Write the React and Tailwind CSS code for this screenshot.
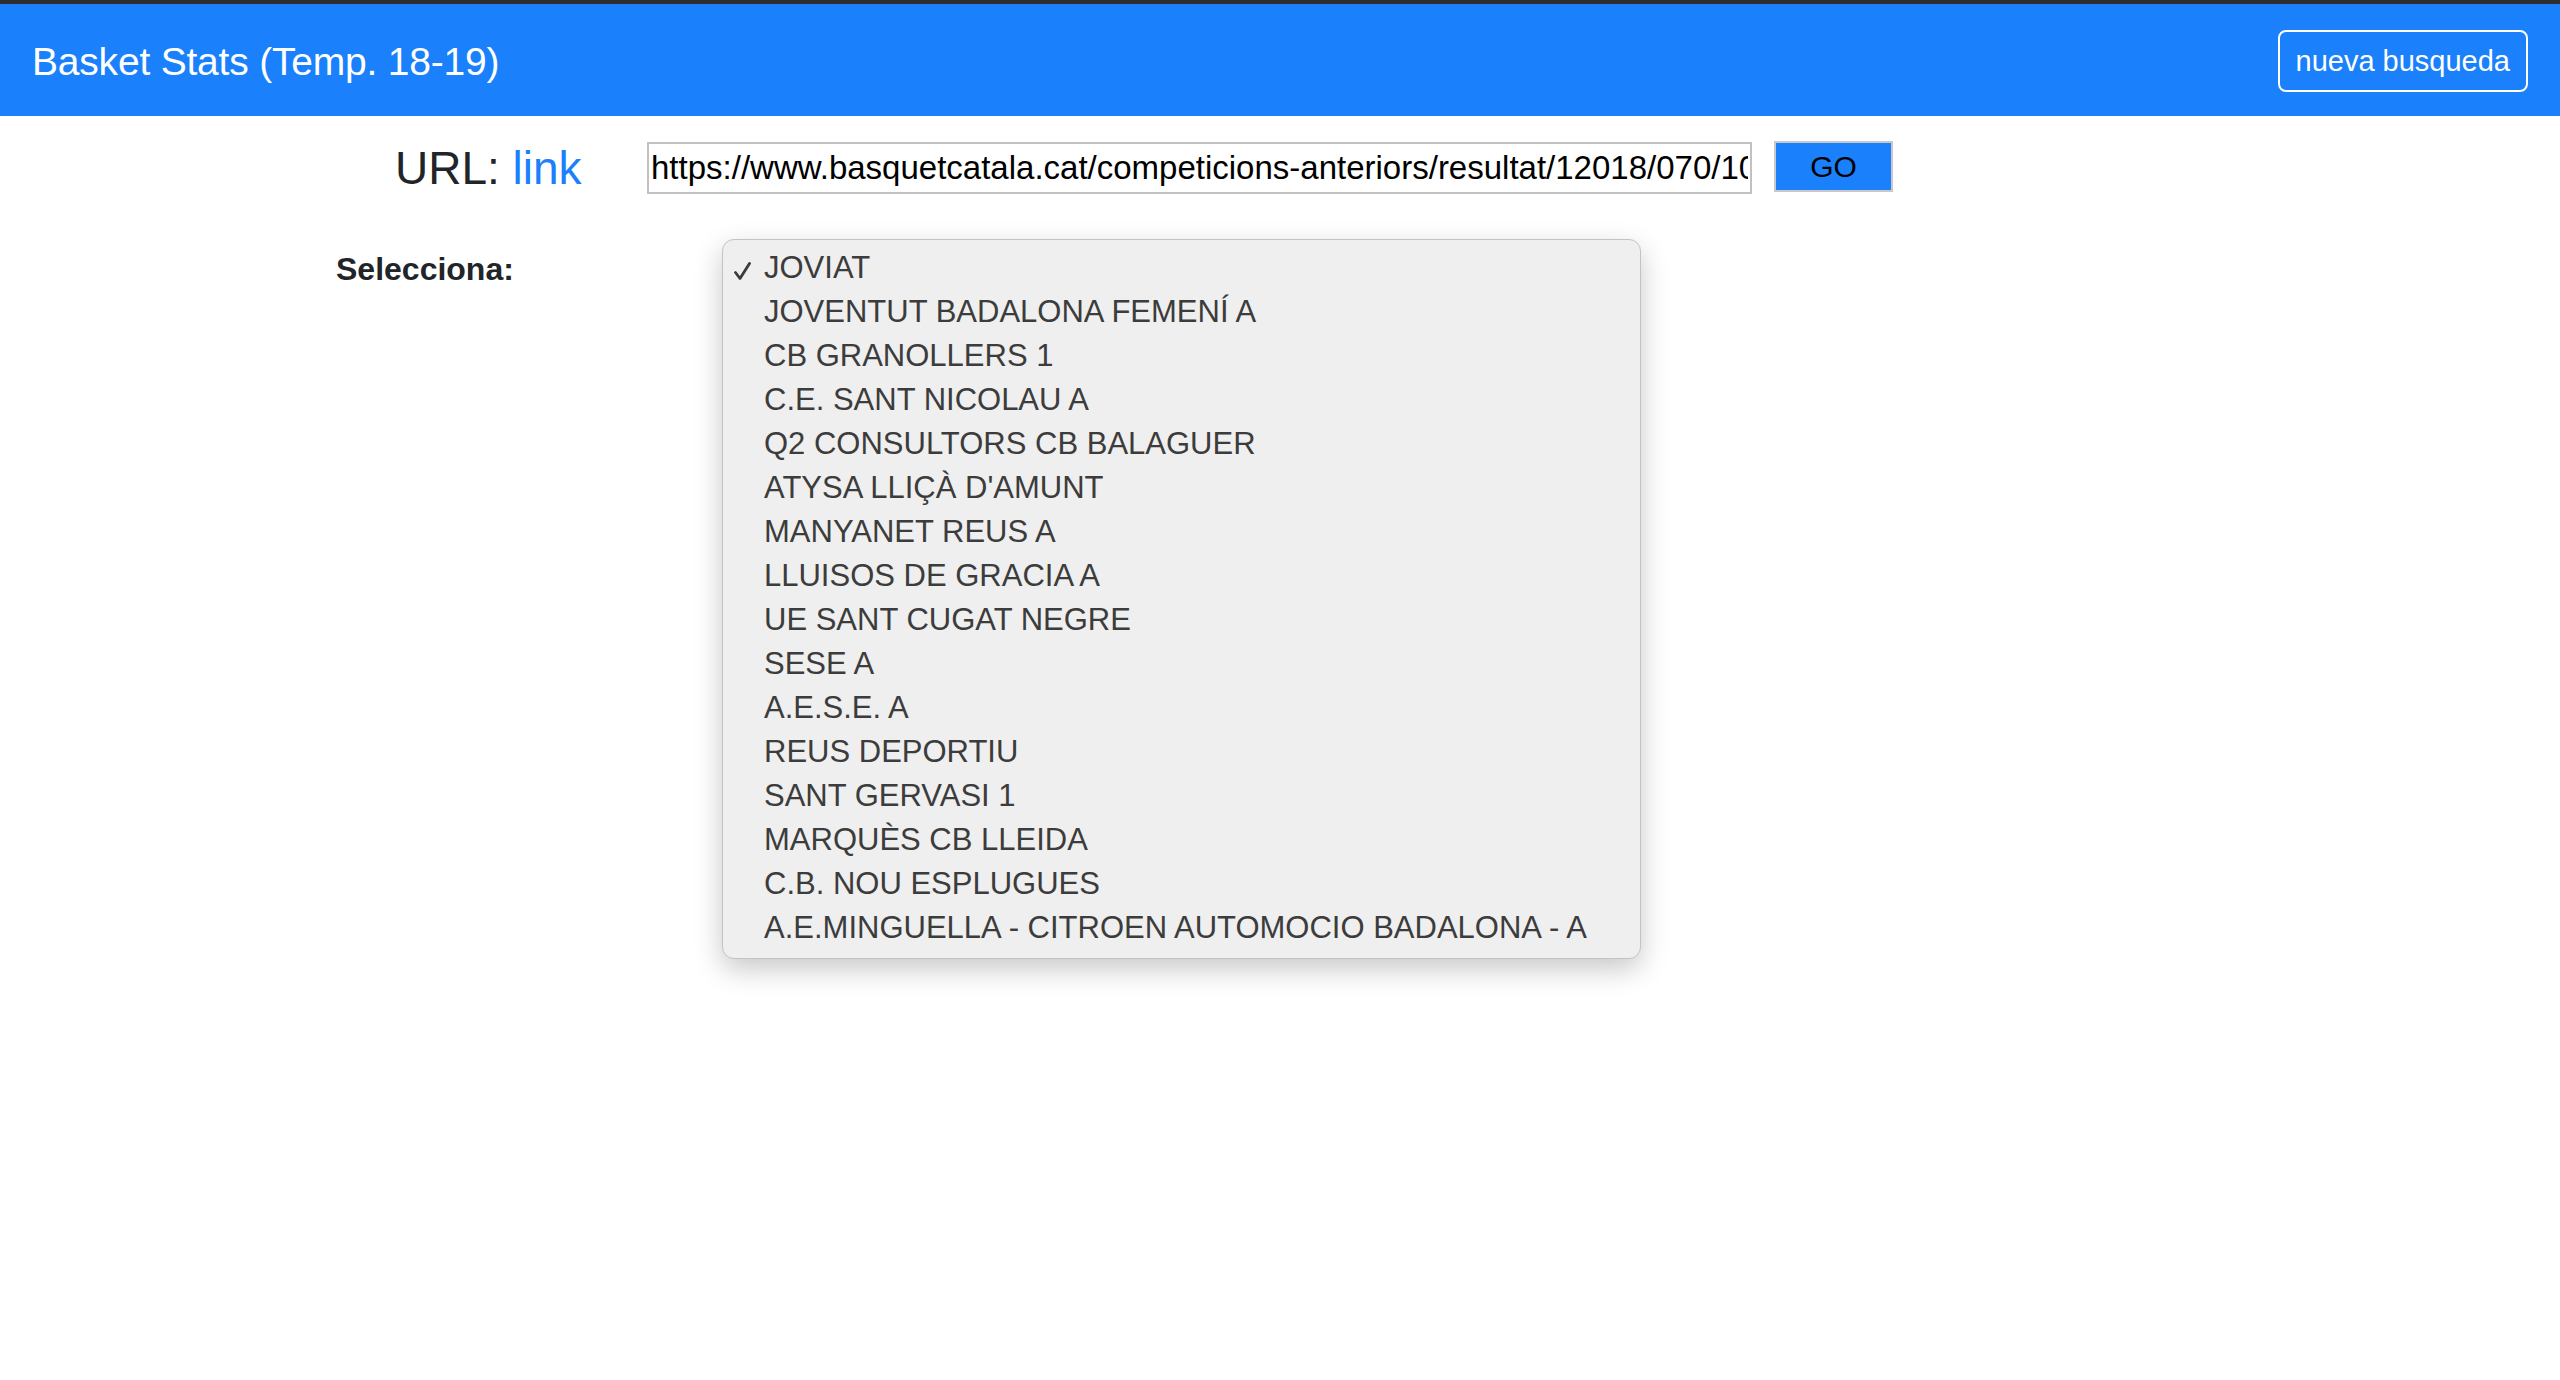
import React from 'react';

const teams = [
    'JOVIAT',
    'JOVENTUT BADALONA FEMENÍ A',
    'CB GRANOLLERS 1',
    'C.E. SANT NICOLAU A',
    'Q2 CONSULTORS CB BALAGUER',
    "ATYSA LLIÇÀ D'AMUNT",
    'MANYANET REUS A',
    'LLUISOS DE GRACIA A',
    'UE SANT CUGAT NEGRE',
    'SESE A',
    'A.E.S.E. A',
    'REUS DEPORTIU',
    'SANT GERVASI 1',
    'MARQUÈS CB LLEIDA',
    'C.B. NOU ESPLUGUES',
    'A.E.MINGUELLA - CITROEN AUTOMOCIO BADALONA - A',
];

const url = 'https://www.basquetcatala.cat/competicions-anteriors/resultat/12018/070/1019/2018-2019';

const App = () => {
    return (
        <div className="min-h-[1380px] bg-white font-['Liberation_Sans',Arial,sans-serif]">
            {/* barra superior */}
            <div className="h-[4px] bg-[#2e2e2e]" />
            <nav className="h-[112px] bg-[#1a80fb] flex items-center justify-between px-[32px]">
                <span className="text-white text-[39px] leading-none tracking-[-0.2px] mt-[2px]">Basket Stats (Temp. 18-19)</span>
                <button className="h-[62px] px-[16px] border-2 border-white rounded-[8px] text-white text-[29px] leading-none mt-[2px]">
                    nueva busqueda
                </button>
            </nav>

            {/* URL */}
            <div className="flex items-start mt-[26px]">
                <div className="w-[647px] pl-[395px] h-[52px] flex items-center">
                    <span className="text-[46px] leading-none text-[#212529] whitespace-nowrap">
                        URL: <span className="text-[#1a80fb]">link</span>
                    </span>
                </div>
                <input
                    readOnly
                    value={url}
                    className="w-[1105px] h-[52px] border-2 border-[#c1c1c1] px-[2px] text-[33px] text-black outline-none"
                />
                <button className="ml-[22px] -mt-[1px] w-[119px] h-[51px] border-2 border-[#c9c9c9] bg-[#1a80fb] text-black text-[30px] leading-none">
                    GO
                </button>
            </div>

            {/* selector de equipo */}
            <div className="flex items-start mt-[45px]">
                <div className="w-[722px] pl-[336px] pt-[6px]">
                    <span className="text-[32px] leading-[48px] font-bold text-[#212529]">Selecciona:</span>
                </div>
                <div className="w-[919px] h-[720px] bg-[#efefef] border border-[#c3c3c3] rounded-[12px] shadow-[0_10px_28px_rgba(0,0,0,0.22)] pt-[6px] pb-[7px]">
                    {teams.map((team, index) => (
                        <div key={index} className="flex items-center h-[44px] text-[31px] text-[#3c3c3c] whitespace-nowrap">
                            <span className="w-[41px] flex justify-end pr-[13px] pt-[6px]">
                                {index === 0 && (
                                    <svg width="17" height="18" viewBox="0 0 17 18" fill="none">
                                        <path d="M1.5 10.5 L6 16.5 L15.5 1.5" stroke="#3c3c3c" strokeWidth="2.8" strokeLinecap="round" strokeLinejoin="round" />
                                    </svg>
                                )}
                            </span>
                            <span>{team}</span>
                        </div>
                    ))}
                </div>
            </div>
        </div>
    );
};

export default App;
